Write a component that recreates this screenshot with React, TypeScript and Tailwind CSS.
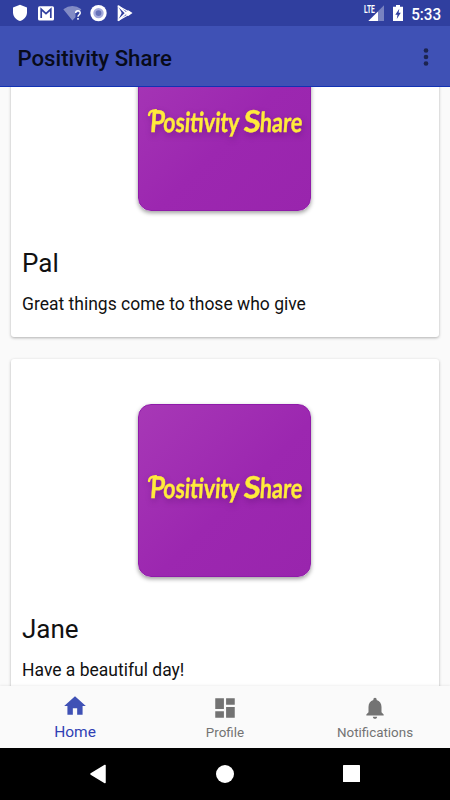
import React from 'react';

function StatusBar() {
  return (
    <div className="flex h-[26px] shrink-0 items-center bg-[#303f9f] text-white">
      <svg width="140" height="26" viewBox="0 0 140 26" fill="#fff">
        <path d="M20 4.800 27 7.400v4.800c0 4.200-2.900 7.300-7 8.800-4.100-1.500-7-4.600-7-8.800V7.400z" />
        <rect x="38" y="6.200" width="16" height="14.300" rx="1.500" />
        <path d="M41.200 18V9.300L46 13.700l4.800-4.400V18" fill="none" stroke="#303f9f" strokeWidth="1.700" />
        <path d="M63.300 9.300Q72.400 2.600 81.400 9.300L79 12.200H75.500V17.300L72.400 20.600z" opacity=".4" />
        <path d="M75.700 13.100c0-3.200 4.500-3.100 4.500-.2 0 1.700-2.200 1.900-2.200 3.900" fill="none" stroke="#fff" strokeWidth="1.500" />
        <rect x="77.200" y="18" width="1.600" height="1.700" />
        <circle cx="98.500" cy="13.100" r="8.200" />
        <circle cx="98.500" cy="13.100" r="5.200" fill="#a4aadd" />
        <circle cx="98.500" cy="13.100" r="2.900" fill="#6571b8" />
        <path d="M117.700 5.300 121.700 13.100 117.700 21z" />
        <path d="M118.600 6.200 127.500 14.600M118.600 20.200 127.500 11.600" fill="none" stroke="#fff" strokeWidth="1.800" strokeLinecap="round" />
        <path d="M118.600 6.200 129.500 12.300M118.600 20.200 129.500 14" fill="none" stroke="#fff" strokeWidth="1.200" />
        <path d="m128.300 10.300 4.200 2.800-4.200 2.800-2.400-2.800z" />
      </svg>
      <svg className="ml-auto" width="90" height="26" viewBox="360 0 90 26" fill="#fff">
        <text x="364" y="12.600" fontSize="10" fontWeight="700" textLength="10.800" lengthAdjust="spacingAndGlyphs" fontFamily="Roboto, sans-serif">LTE</text>
        <path d="M384 5.300V21H378V11.300z" opacity=".35" />
        <path d="M378 11.500V21h-9.700z" />
        <path d="M396 5h4v1.700h3V21H393V6.700h3z" />
        <path d="m399.300 8.700-4 6.100h2.200l-.7 4.200 4-6.200h-2.200z" fill="#303f9f" />
        <text x="411.200" y="19.600" fontSize="16.500" fontWeight="500" textLength="30" lengthAdjust="spacingAndGlyphs" fontFamily="Roboto, sans-serif">5:33</text>
      </svg>
    </div>
  );
}

function AppBar() {
  return (
    <header className="flex h-[61px] shrink-0 items-center justify-between border-b border-[#1232b4] bg-[#3f51b5] pr-[21px] pl-[17.500px]">
      <h1 className="pt-[4px] text-[22.200px] leading-[28px] font-medium text-[#080b1a]">Positivity Share</h1>
      <svg className="mt-[2px]" width="6" height="20" viewBox="0 0 6 20" fill="#1c2450">
        <circle cx="3" cy="3.500" r="2.300" />
        <circle cx="3" cy="10" r="2.300" />
        <circle cx="3" cy="16.500" r="2.300" />
      </svg>
    </header>
  );
}

function LogoTile() {
  return (
    <div className="ml-[116px] h-[173px] w-[173px] rounded-[13px] border border-[#8f1ba9] bg-[linear-gradient(135deg,#a738b6_0%,#9c27b0_55%,#9925ad_100%)] shadow-[0_2px_4px_rgba(0,0,0,0.38)]">
      <svg width="171" height="171" viewBox="139 405 171 171" className="overflow-visible [filter:drop-shadow(1px_3px_3px_rgba(70,0,90,0.35))]">
        <path d="M149 481Q149.500 476.500 156 476.300" fill="none" stroke="#ffeb3b" strokeWidth="2.400" strokeLinecap="round" />
        <text
          transform="translate(0 497.800) skewX(-4)"
          y="0"
          fontSize="27.500"
          fontWeight="700"
          fontFamily="Lato, sans-serif"
          fill="#ffeb3b"
          stroke="#ffeb3b"
          strokeWidth=".4"
          strokeLinejoin="round"
        >
          <tspan x="149.500" fontSize="30" textLength="15" lengthAdjust="spacingAndGlyphs">P</tspan>
          <tspan x="162.800" textLength="76" lengthAdjust="spacingAndGlyphs">ositivity</tspan>
          <tspan x="243" fontSize="30" textLength="17" lengthAdjust="spacingAndGlyphs">S</tspan>
          <tspan x="259.300" textLength="42.500" lengthAdjust="spacingAndGlyphs">hare</tspan>
        </text>
      </svg>
    </div>
  );
}

function PostCard({ name, message }: { name: string; message: string }) {
  return (
    <article className="h-[344px] shrink-0 rounded-[3px] bg-white px-[11px] pt-[45px] shadow-[0_1px_3px_rgba(0,0,0,0.3)]">
      <LogoTile />
      <h2 className="mt-[35px] text-[26px] leading-[34px] text-[#111]">{name}</h2>
      <p className="mt-[12px] text-[17.500px] leading-[24px] text-[#111]">{message}</p>
    </article>
  );
}

function BottomTabs() {
  return (
    <nav className="relative grid h-[62px] shrink-0 grid-cols-3 bg-[#fafafa] text-center text-[#737373] shadow-[0_-1px_2px_rgba(0,0,0,0.06)]">
      <div className="flex flex-col items-center pt-[7px] text-[#3040b4]">
        <svg width="26" height="26" viewBox="0 0 24 24" fill="#3f51b5"><path d="M10 20v-6h4v6h5v-8h3L12 3 2 12h3v8z" /></svg>
        <span className="mt-[3px] text-[15.500px] leading-[20px]">Home</span>
      </div>
      <div className="flex flex-col items-center pt-[9px]">
        <svg width="26" height="26" viewBox="0 0 24 24" fill="#737373"><path d="M3 13h8V3H3v10zm0 8h8v-6H3v6zm10 0h8V11h-8v10zm0-18v6h8V3h-8z" /></svg>
        <span className="mt-[2px] text-[13.400px] leading-[20px]">Profile</span>
      </div>
      <div className="flex flex-col items-center pt-[9px]">
        <svg width="26" height="26" viewBox="0 0 24 24" fill="#737373"><path d="M12 22c1.100 0 2-.9 2-2h-4c0 1.100.9 2 2 2zm6-6v-5c0-3.070-1.640-5.640-4.500-6.320V4c0-.83-.67-1.500-1.500-1.500s-1.500.67-1.500 1.500v.68C7.630 5.360 6 7.920 6 11v5l-2 2v1h16v-1z" /></svg>
        <span className="mt-[2px] text-[13.400px] leading-[20px]">Notifications</span>
      </div>
    </nav>
  );
}

function SystemBar() {
  return (
    <svg className="h-[52px] w-full shrink-0 bg-black" viewBox="0 748 450 52" fill="#fff">
      <path d="M91 774 105 765.500V782.500z" stroke="#fff" strokeWidth="1.500" strokeLinejoin="round" />
      <circle cx="225" cy="774" r="9" />
      <rect x="343" y="765" width="17" height="17" rx=".6" />
    </svg>
  );
}

export default function App() {
  return (
    <div className="flex h-[800px] w-[450px] flex-col overflow-hidden bg-[#fafafa] font-['Roboto',sans-serif]">
      <StatusBar />
      <AppBar />
      <main className="min-h-0 flex-1 overflow-hidden px-[11px]">
        <div className="-mt-[94px] flex flex-col gap-[22px]">
          <PostCard name="Pal" message="Great things come to those who give" />
          <PostCard name="Jane" message="Have a beautiful day!" />
        </div>
      </main>
      <BottomTabs />
      <SystemBar />
    </div>
  );
}
